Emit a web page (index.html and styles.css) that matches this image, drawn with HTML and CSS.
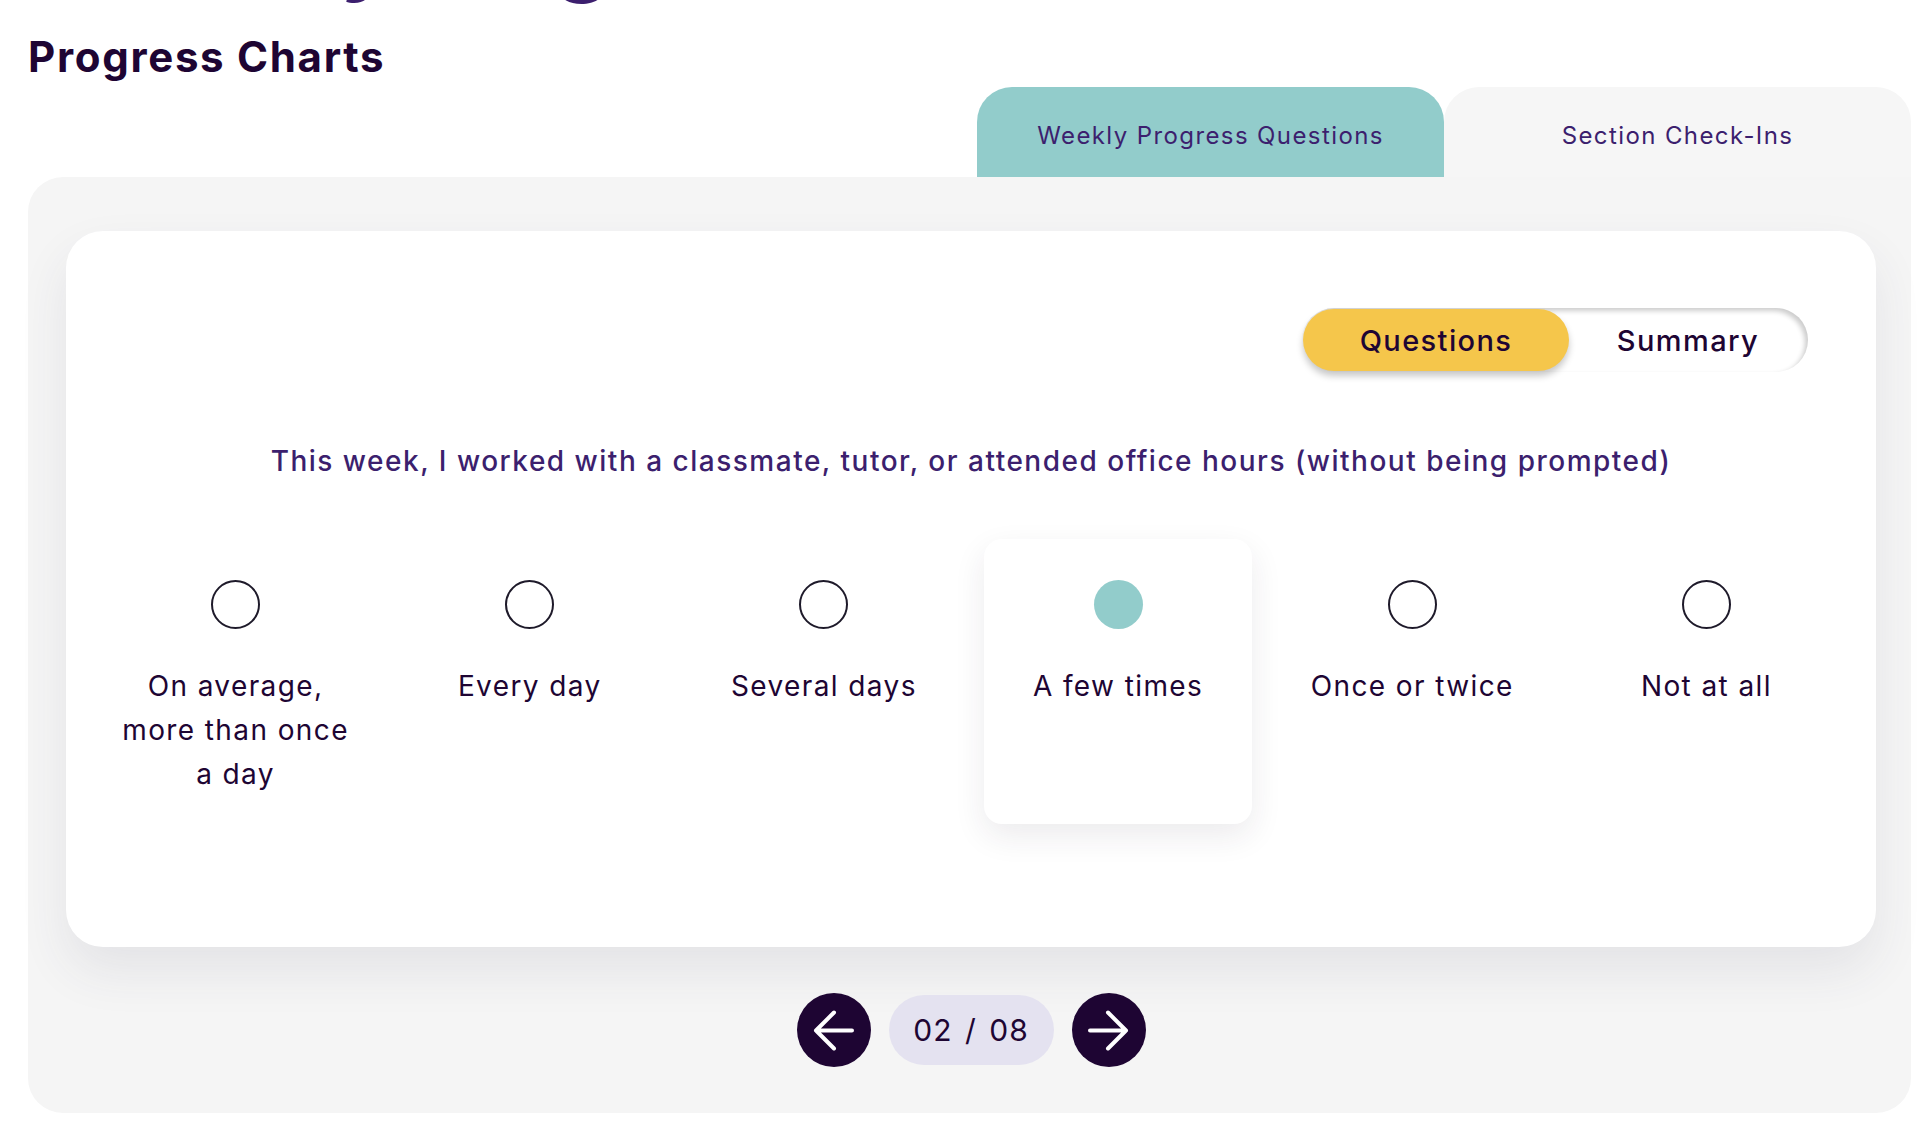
FILE: index.html
```html
<!DOCTYPE html>
<html lang="en">
<head>
<meta charset="utf-8">
<title>Progress Charts</title>
<link rel="stylesheet" href="styles.css">
</head>
<body>
<div class="page">
  <h1 class="page-heading">Weekly Progress</h1>
  <h2 class="section-title">Progress Charts</h2>
  <div class="charts">
    <div class="tabs">
      <button class="tab tab-active">Weekly Progress Questions</button>
      <button class="tab">Section Check-Ins</button>
    </div>
    <div class="panel">
      <div class="card">
        <div class="toggle">
          <span class="toggle-btn toggle-active">Questions</span>
          <span class="toggle-btn">Summary</span>
        </div>
        <p class="question">This week, I worked with a classmate, tutor, or attended office hours (without being prompted)</p>
        <div class="options">
          <div class="option"><span class="radio"></span><span class="label">On average, more than once a day</span></div>
          <div class="option"><span class="radio"></span><span class="label">Every day</span></div>
          <div class="option"><span class="radio"></span><span class="label">Several days</span></div>
          <div class="option option-selected"><span class="radio radio-checked"></span><span class="label">A few times</span></div>
          <div class="option"><span class="radio"></span><span class="label">Once or twice</span></div>
          <div class="option"><span class="radio"></span><span class="label">Not at all</span></div>
        </div>
      </div>
      <div class="pager">
        <button class="pager-btn" aria-label="Previous">
          <svg width="41" height="41" viewBox="0 0 41 41"><path d="M39 20.5H3M21 2.5L3 20.5L21 38.5" fill="none" stroke="#fff" stroke-width="4" stroke-linecap="round" stroke-linejoin="round"/></svg>
        </button>
        <span class="pager-count">02 / 08</span>
        <button class="pager-btn" aria-label="Next">
          <svg width="41" height="41" viewBox="0 0 41 41"><path d="M2 20.5H38M20 2.5L38 20.5L20 38.5" fill="none" stroke="#fff" stroke-width="4" stroke-linecap="round" stroke-linejoin="round"/></svg>
        </button>
      </div>
    </div>
  </div>
</div>
</body>
</html>
```

FILE: styles.css
```css
* { box-sizing: border-box; }

html, body {
  margin: 0;
  padding: 0;
  background: #ffffff;
}

body {
  font-family: Inter, "Noto Sans", "DejaVu Sans", sans-serif;
  color: #1e0533;
}

.page {
  padding: 0 19px 0 28px;
}

.page-heading {
  margin: -100px 0 36px 0;
  font-size: 96px;
  line-height: 96px;
  font-weight: 600;
  color: #3c1f6e;
  letter-spacing: 5px;
  word-spacing: -50px;
  white-space: nowrap;
}

.section-title {
  margin: 0;
  font-size: 42px;
  line-height: 50px;
  font-weight: 700;
  letter-spacing: 1.7px;
  color: #1e0533;
}

.charts {
  margin-top: 5px;
}

.tabs {
  display: flex;
  justify-content: flex-end;
}

.tab {
  width: 467px;
  height: 90px;
  border: none;
  border-radius: 35px 35px 0 0;
  background: #f6f6f6;
  font-family: inherit;
  font-size: 24px;
  font-weight: 400;
  letter-spacing: 1.4px;
  color: #3c1f6e;
  padding: 6px 0 0 0;
}

.tab-active {
  background: #92cccb;
}

.panel {
  background: #f5f5f5;
  border-radius: 35px 0 35px 35px;
  padding: 54px 35px 46px 38px;
}

.card {
  background: #ffffff;
  border-radius: 37px;
  box-shadow: 0 24px 50px rgba(60, 50, 90, 0.09);
  padding: 77px 36px 123px;
  display: flex;
  flex-direction: column;
}

.toggle {
  align-self: flex-end;
  margin-right: 32px;
  width: 506px;
  height: 64px;
  padding: 1px;
  display: flex;
  border-radius: 32px;
  background: #ffffff;
  box-shadow: inset -3px 3px 5px rgba(0, 0, 0, 0.2);
}

.toggle-btn {
  flex: 1;
  display: flex;
  align-items: center;
  justify-content: center;
  font-size: 29px;
  font-weight: 500;
  letter-spacing: 1.4px;
  color: #1e0533;
  border-radius: 31px;
}

.toggle-active {
  flex: 0 0 266px;
  background: #f5c64b;
  box-shadow: 0 5px 7px rgba(0, 0, 0, 0.22);
}

.question {
  margin: 69px 0 0 0;
  text-align: center;
  font-size: 28px;
  line-height: 40px;
  font-weight: 500;
  letter-spacing: 1.5px;
  color: #3c1f6e;
}

.options {
  margin-top: 58px;
  display: grid;
  grid-template-columns: repeat(6, 1fr);
  column-gap: 27px;
}

.option {
  display: flex;
  flex-direction: column;
  align-items: center;
  padding: 41px 10px 28px;
  border-radius: 18px;
}

.option-selected {
  background: #ffffff;
  box-shadow: 0 12px 32px rgba(40, 30, 60, 0.09);
}

.radio {
  width: 49px;
  height: 49px;
  border: 2px solid #1e1a2a;
  border-radius: 50%;
}

.radio-checked {
  background: #92cccb;
  border: none;
}

.label {
  margin-top: 35px;
  text-align: center;
  font-size: 28px;
  line-height: 44px;
  font-weight: 400;
  letter-spacing: 1.4px;
  color: #1e0533;
}

.pager {
  margin-top: 46px;
  display: flex;
  justify-content: center;
  align-items: center;
  gap: 18px;
}

.pager-btn {
  width: 74px;
  height: 74px;
  border: none;
  border-radius: 50%;
  background: #1e0533;
  padding: 0;
  display: flex;
  align-items: center;
  justify-content: center;
}

.pager-count {
  width: 165px;
  height: 70px;
  border-radius: 35px;
  background: #e4e2f0;
  display: flex;
  align-items: center;
  justify-content: center;
  font-size: 30px;
  letter-spacing: 1px;
  word-spacing: 3px;
  color: #1e0533;
}
```
